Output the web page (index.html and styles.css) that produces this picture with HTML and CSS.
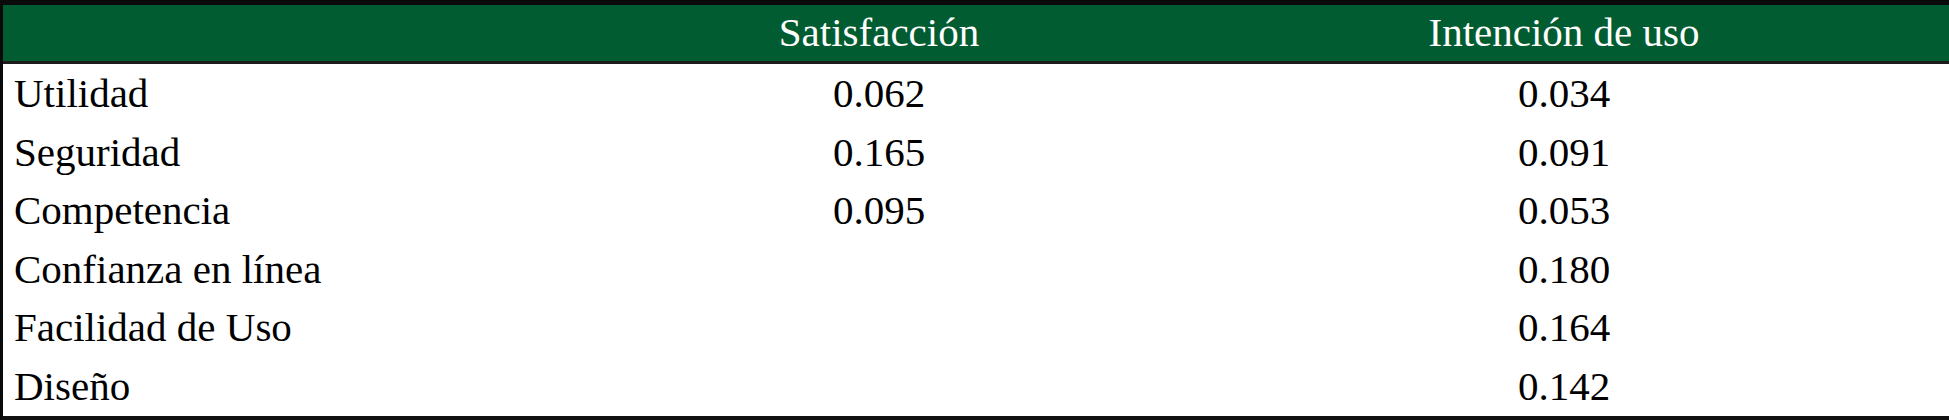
FILE: index.html
```html
<!DOCTYPE html>
<html lang="es">
<head>
<meta charset="utf-8">
<link rel="stylesheet" href="styles.css">
</head>
<body>
<table class="tbl">
  <colgroup>
    <col class="c1">
    <col class="c2">
    <col class="c3">
  </colgroup>
  <thead>
    <tr class="head">
      <th class="lbl"></th>
      <th>Satisfacción</th>
      <th>Intención de uso</th>
    </tr>
  </thead>
  <tbody>
    <tr><td class="lbl">Utilidad</td><td>0.062</td><td>0.034</td></tr>
    <tr><td class="lbl">Seguridad</td><td>0.165</td><td>0.091</td></tr>
    <tr><td class="lbl">Competencia</td><td>0.095</td><td>0.053</td></tr>
    <tr><td class="lbl">Confianza en línea</td><td></td><td>0.180</td></tr>
    <tr><td class="lbl">Facilidad de Uso</td><td></td><td>0.164</td></tr>
    <tr><td class="lbl">Diseño</td><td></td><td>0.142</td></tr>
  </tbody>
</table>
</body>
</html>
```

FILE: styles.css
```css
html, body {
  margin: 0;
  padding: 0;
  background: #ffffff;
}

.tbl {
  width: 1949px;
  border-collapse: separate;
  border-spacing: 0;
  table-layout: fixed;
  font-family: "Liberation Serif", "Times New Roman", serif;
  font-size: 41px;
  color: #000;
  border-top: 5px solid #0a0a0a;
  border-left: 3px solid #0a0a0a;
  border-bottom: 4px solid #111;
}

.c1 { width: 576px; }
.c2 { width: 600px; }
.c3 { width: 770px; }

.head th {
  background: #025c31;
  color: #ffffff;
  font-weight: normal;
  height: 56px;
  padding: 0;
  line-height: 54px;
  padding-bottom: 2px;
  box-sizing: border-box;
  text-align: center;
  border-bottom: 3px solid #1c1c1c;
  white-space: nowrap;
}

tbody td {
  padding: 2px 0 2px 0;
  line-height: 54.6px;
  text-align: center;
  white-space: nowrap;
}

tbody td.lbl {
  text-align: left;
  padding-left: 11px;
}
```
